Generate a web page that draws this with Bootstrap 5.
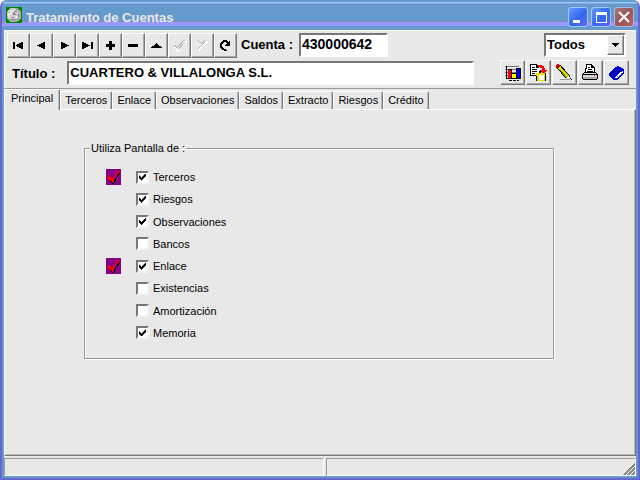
<!DOCTYPE html>
<html lang="es">
<head>
<meta charset="utf-8">
<meta name="viewport" content="width=device-width, initial-scale=1">
<title>Tratamiento de Cuentas</title>
<link rel="stylesheet" href="https://cdn.jsdelivr.net/npm/bootstrap@5.3.0/dist/css/bootstrap.min.css">
<style>
  :root { --face: #e8e8e8; --shade: #999; --dark: #777; --frame: #69c; }
  body { font: 11px/16px "Liberation Sans", Arial, sans-serif; color: #000; background: #fff; }
  svg { display: block; shape-rendering: crispEdges; }
  .window { background: var(--frame); border: 2px solid #66c; border-top: 0; border-radius: 7px 7px 0 0; padding: 0 2px 2px; }
  .titlebar { height: 30px; margin: 0 -2px; padding: 3px 4px 0; border-radius: 6px 6px 0 0;
    background: linear-gradient(#69c 0 2px, #9cf 2px 3px, #8ad 3px 4px, #69c 4px 21px, #88b 21px 22px, #99f 22px 26px, #69c 26px); }
  .caption { font-size: 13px; font-weight: 700; color: #e8e8e8; margin: 0; line-height: 14px; }
  .win-btns { gap: 3px; }
  .win-btn { width: 20px; height: 20px; padding: 0; border: 1px solid #9cf; border-radius: 3px; background: linear-gradient(135deg, #69f, #36e 55%, #66f); }
  .win-close { background: linear-gradient(135deg, #a77, #955 50%, #b66); border-color: #a9b8dd; }
  .client { background: var(--face); }
  .toolbar { font-size: 13px; font-weight: 700; border-top: 1px solid #fff; border-left: 1px solid #fff; border-bottom: 1px solid var(--shade); height: 59px; padding: 2px 7px 0 2px; }
  .tool { background: var(--face); border: 1px solid; border-color: #fff var(--dark) var(--dark) #fff; box-shadow: inset -1px -1px #aaa; padding: 0; display: flex; align-items: center; justify-content: center; }
  .nav-tool { width: 23px; height: 25px; }
  .big-tool { width: 25px; height: 25px; }
  .big-tools { gap: 1px; margin-left: 26px; }
  .field { height: 24px; border: 2px solid; border-color: var(--dark) #fff #fff var(--dark); border-radius: 0; background: #fff; padding: 0 1px 3px; font-weight: 700; color: #000; outline-offset: -3px; }
  .account { width: 89px; font-size: 14px; margin-left: 6px; }
  .name-row { padding-top: 2px; }
  .name-row label { margin: 6px 12px 0 5px; }
  .name-field { font-size: 13px; margin-top: 1px; padding-bottom: 1px; }
  .combo { width: 82px; margin-right: 3px; }
  .combo select { width: 100%; height: 24px; appearance: none; font-size: 13px; padding: 0 1px; }
  .combo span { position: absolute; top: 2px; right: 2px; width: 17px; height: 20px; pointer-events: none; }
  .tabs { height: 20px; }
  .tab-btn { background: none; height: 18px; padding: 0 4px; line-height: 17px; border: 0; border-top: 1px solid #fff; border-left: 1px solid #fff; border-right: 1px solid var(--dark); box-shadow: inset -1px 0 #bbb; border-radius: 2px 2px 0 0; }
  .tab-btn.active { height: 21px; padding: 0 6px 4px; margin-bottom: -1px; background: var(--face); position: relative; line-height: 17px; }
  .page { border: 1px solid; border-color: #fff var(--dark) var(--dark) #fff; box-shadow: inset -1px -1px #bbb; padding: 30px 81px 40px 79px; }
  .group { border: 1px solid var(--shade); box-shadow: 1px 1px #fff, inset 1px 1px #fff; height: 211px; padding: 0 0 0 21px; margin: 8px 0 0; }
  .group legend { float: none; width: auto; font-size: 11px; line-height: 16px; margin: -9px 0 13px -16px; padding: 0 1px; background: var(--face); }
  .options { height: 172px; }
  .mark-slot { width: 15px; height: 16px; margin-right: 15px; }
  .tick { appearance: none; width: 13px; height: 13px; margin: 0 4px 0 0; border: 2px solid; border-color: var(--dark) #f4f4f4 #f4f4f4 var(--dark); background: #fff; padding: 1px; }
  .tick:checked::before { content: ""; display: block; width: 7px; height: 7px; background: #000;
    clip-path: polygon(0 2px,1px 2px,1px 3px,2px 3px,2px 4px,3px 4px,3px 3px,4px 3px,4px 2px,5px 2px,5px 1px,6px 1px,6px 0,7px 0,7px 3px,6px 3px,6px 4px,5px 4px,5px 5px,4px 5px,4px 6px,3px 6px,3px 7px,2px 7px,2px 6px,1px 6px,1px 5px,0 5px); }
  .status { padding-top: 2px; gap: 2px; }
  .pane { height: 18px; border: 1px solid; border-color: var(--shade) #fff #fff var(--shade); flex: 310 1 0; }
  .pane-wide { flex-grow: 320; }
</style>
</head>
<body>
<div class="window min-vh-100 d-flex flex-column">
  <header class="titlebar d-flex">
    <svg class="mt-1 me-1" width="16" height="16" viewBox="0 0 16 16" aria-hidden="true"><path fill="#080" d="M0 0h16v16H0z"/><circle cx="8" cy="8" r="7.5" fill="#aaa"/><circle cx="7" cy="7" r="6" fill="#ccc"/><path fill="#e4e4e4" d="M4 3h5v2H6v3H4v3H2V6h2zM9 9h3v2H9z"/><path fill="#888" d="M10 2h2v1h-2zM8 4h3v1H9v2h1v1H7V6h1zM12 7h1v3h-1zM5 12h5v1H5zM6 10h2v1H6z"/></svg>
    <h1 class="caption flex-grow-1 mt-1 pt-1">Tratamiento de Cuentas</h1>
    <div class="win-btns d-flex mt-1">
      <button class="win-btn" type="button" aria-label="Minimizar"><svg width="18" height="18"><path fill="#fff" d="M4 12h7v3H4z"/></svg></button>
      <button class="win-btn" type="button" aria-label="Maximizar"><svg width="18" height="18"><path fill="#fff" fill-rule="evenodd" d="M4 4h11v11H4zm1 3v7h9V7z"/></svg></button>
      <button class="win-btn win-close" type="button" aria-label="Cerrar"><svg width="18" height="18"><path stroke="#fff" stroke-width="2" d="M4 4l10 10M14 4L4 14" shape-rendering="auto"/></svg></button>
    </div>
  </header>

  <main class="client flex-grow-1 d-flex flex-column">
    <form class="toolbar">
      <div class="d-flex align-items-start">
        <div class="d-flex">
          <button class="tool nav-tool" type="button" aria-label="Primero"><svg width="11" height="9"><path d="M0 1h2v7H0zM3 4h1V3h2V2h2V1h2v7H8V7H6V6H4V5H3z"/></svg></button>
          <button class="tool nav-tool" type="button" aria-label="Anterior"><svg width="9" height="9"><path d="M0 4h2V3h2V2h2V1h2v7H6V7H4V6H2V5H0z"/></svg></button>
          <button class="tool nav-tool" type="button" aria-label="Siguiente"><svg width="9" height="9"><path d="M9 4H7V3H5V2H3V1H1v7h2V7h2V6h2V5h2z"/></svg></button>
          <button class="tool nav-tool" type="button" aria-label="Último"><svg width="11" height="9"><path d="M8 4H6V3H4V2H2V1H0v7h2V7h2V6h2V5h2zM9 1h2v7H9z"/></svg></button>
          <button class="tool nav-tool" type="button" aria-label="Añadir"><svg width="9" height="9"><path d="M3 0h3v3h3v3H6v3H3V6H0V3h3z"/></svg></button>
          <button class="tool nav-tool" type="button" aria-label="Borrar"><svg width="11" height="9"><path d="M0 3h10v3H0z"/></svg></button>
          <button class="tool nav-tool" type="button" aria-label="Editar"><svg width="11" height="9"><path d="M5 2h1v1h1v1h1v1h2v1h1v1H0V6h1V5h2V4h1V3h1z"/></svg></button>
          <button class="tool nav-tool" type="button" aria-label="Aceptar" disabled><svg width="14" height="12"><path fill="none" stroke="#fff" stroke-width="2" d="M2 7l3 4 8-10"/><path fill="none" stroke="#bbb" d="M0 7l2-2 2 3 7-8h1M5 10l7-8"/></svg></button>
          <button class="tool nav-tool" type="button" aria-label="Cancelar" disabled><svg width="13" height="12"><path stroke="#fff" stroke-width="2" d="M2 2l9 9M11 2l-9 9"/><path stroke="#bbb" fill="none" d="M1 1l9 9M10 1l-9 9M2 0l4 4M9 0L6 4"/></svg></button>
          <button class="tool nav-tool" type="button" aria-label="Refrescar"><svg width="11" height="11"><path d="M3 0h4v1h1v1h1V1h1v5H5V5h1V4h1V3H6V2H4v1H3v1H2v3h1v1h1v1h2v1h1v1H4v-1H2V9H1V8H0V3h1V2h1V1h1z"/></svg></button>
        </div>
        <label class="ms-1 mt-1" for="cuenta">Cuenta :</label>
        <input class="field account me-auto" id="cuenta" value="430000642">
        <div class="combo position-relative">
          <select class="field" aria-label="Filtro"><option>Todos</option></select>
          <span class="tool" aria-hidden="true"><svg width="7" height="4"><path d="M0 0h7v1H6v1H5v1H4v1H3V3H2V2H1V1H0z"/></svg></span>
        </div>
      </div>
      <div class="name-row d-flex align-items-start">
        <label for="titulo">Título :</label>
        <input class="field name-field flex-grow-1" id="titulo" value="CUARTERO &amp; VILLALONGA S.L.">
        <div class="big-tools d-flex">
          <button class="tool big-tool" type="button" aria-label="Gráfico"><svg width="16" height="16"><path fill="#777" d="M0 1h14v1H0zM0 4h14v1H0zM0 7h14v1H0zM0 10h14v1H0z"/><path fill="#ff0" d="M7 9h4v4H7z"/><path fill="red" d="M3 5h3v8H3z"/><path fill="#00f" d="M12 3h3v10h-3z"/><path d="M1 1h1v12h13v1H1zM3 4h4v1H3zM6 5h1v8H6zM7 8h4v1H7zM11 3h4v1h-3v9h-1zM15 3h1v11h-1zM4 15h3v1H4zM8 15h3v1H8zM12 15h2v1h-2z"/></svg></button>
          <button class="tool big-tool" type="button" aria-label="Exportar"><svg width="17" height="17"><path fill="#fff" d="M0 0h7l2 3v9H0z"/><path d="M0 0h7v1H1v10h7v1H0zM7 1h1v1h1v2H6V1h1zM2 3h3v1H2zM2 5h5v1H2zM2 7h5v1H2zM2 9h3v1H2z"/><path fill="#dd0" d="M6 9h10v8H6z"/><path d="M9 7h2v2H9zM6 12h1v5H6zM15 9h1v8h-1z"/><path fill="#fff" d="M9 11h5v5H9z"/><path fill="red" d="M8 1h4v1h2v2h1v2h2v1h-1v1h-1v1h-3V8h-1V7h-1V6h2V4h-2V3H8z"/></svg></button>
          <button class="tool big-tool" type="button" aria-label="Modificar"><svg width="17" height="17"><path fill="#999" d="M4 15h10v1H4z"/><path stroke="#000" stroke-width="5" d="M2 2l10 11"/><path d="M12 10l4 6-6-4z"/><path stroke="#dd0" stroke-width="3" d="M3 3l9 10"/><path stroke="#880" d="M4 6l7 8"/><path fill="#c00" d="M1 0h2v1h1v2H3v1H1V3H0V1h1z"/><path fill="#fff" d="M12 12h1v1h1v1h-2z"/></svg></button>
          <button class="tool big-tool" type="button" aria-label="Imprimir"><svg width="17" height="17"><path fill="#fff" d="M4 0h6l3 3v6H3z"/><path d="M4 0h6v1h1v1h1v1h1v6h-1V4H9V1H5v4H4v4H3V4h1zM6 3h2v1H6zM6 5h4v1H6zM5 7h6v1H5zM2 8h12v1H2zM1 9h1v1H1zM14 9h1v1h-1zM0 10h16v5h-1v1H1v-1H0z"/><path fill="#ddd" d="M2 9h12v1H2zM1 11h14v2H1z"/><path fill="#aaa" d="M1 13h14v2H1zM3 11h1v1H3zM6 11h1v1H6zM9 11h1v1H9z"/><path fill="red" d="M12 11h1v1h-1z"/></svg></button>
          <button class="tool big-tool" type="button" aria-label="Ayuda"><svg width="16" height="16"><path fill="#00c" d="M8 1h2v1h2v1h2v1h1v5h-1v1h-1v1h-1v1h-1v1h-1v1H9v1H4v-1H3v-1H2v-1H1v-1H0V8h1V7h1V6h1V5h1V4h1V3h1V2h2z"/><path fill="#fff" d="M13 6h1v2h-1v1h-1v1h-1v1h-1v1H9v1H6v-1h1v-1h1v-1h1V9h1V8h1V7h2z"/><path fill="#006" d="M7 4h2v1H7zM5 6h2v1H5zM2 8h2v1H2z"/><path fill="#888" d="M12 8h1v1h-1zM10 10h1v1h-1zM8 11h1v1H8z"/></svg></button>
        </div>
      </div>
    </form>

    <div class="tabs d-flex align-items-end" role="tablist">
      <button class="tab-btn active" role="tab" type="button" aria-selected="true">Principal</button>
      <button class="tab-btn" role="tab" type="button">Terceros</button>
      <button class="tab-btn" role="tab" type="button">Enlace</button>
      <button class="tab-btn" role="tab" type="button">Observaciones</button>
      <button class="tab-btn" role="tab" type="button">Saldos</button>
      <button class="tab-btn" role="tab" type="button">Extracto</button>
      <button class="tab-btn" role="tab" type="button">Riesgos</button>
      <button class="tab-btn" role="tab" type="button">Crédito</button>
    </div>

    <section class="page flex-grow-1" role="tabpanel">
      <fieldset class="group" aria-labelledby="grp">
        <div class="d-flex"><legend id="grp">Utiliza Pantalla de :</legend></div>
        <div class="options d-flex flex-column justify-content-between">
          <div class="d-flex align-items-center"><span class="mark-slot"><svg width="15" height="16"><path fill="#808" d="M0 0h15v16H0z"/><path fill="none" stroke="#000" d="M3 10l3 4h2l2-5 4-5"/><path fill="red" d="M1 8l2-1 3 3 6-8h2L9 8l-2 5H5z"/></svg></span><input class="tick" type="checkbox" id="o1" checked><label for="o1">Terceros</label></div>
          <div class="d-flex align-items-center"><span class="mark-slot"></span><input class="tick" type="checkbox" id="o2" checked><label for="o2">Riesgos</label></div>
          <div class="d-flex align-items-center"><span class="mark-slot"></span><input class="tick" type="checkbox" id="o3" checked><label for="o3">Observaciones</label></div>
          <div class="d-flex align-items-center"><span class="mark-slot"></span><input class="tick" type="checkbox" id="o4"><label for="o4">Bancos</label></div>
          <div class="d-flex align-items-center"><span class="mark-slot"><svg width="15" height="16"><path fill="#808" d="M0 0h15v16H0z"/><path fill="none" stroke="#000" d="M3 10l3 4h2l2-5 4-5"/><path fill="red" d="M1 8l2-1 3 3 6-8h2L9 8l-2 5H5z"/></svg></span><input class="tick" type="checkbox" id="o5" checked><label for="o5">Enlace</label></div>
          <div class="d-flex align-items-center"><span class="mark-slot"></span><input class="tick" type="checkbox" id="o6"><label for="o6">Existencias</label></div>
          <div class="d-flex align-items-center"><span class="mark-slot"></span><input class="tick" type="checkbox" id="o7"><label for="o7">Amortización</label></div>
          <div class="d-flex align-items-center"><span class="mark-slot"></span><input class="tick" type="checkbox" id="o8" checked><label for="o8">Memoria</label></div>
        </div>
      </fieldset>
    </section>

    <footer class="status d-flex">
      <div class="pane pane-wide"></div>
      <div class="pane d-flex justify-content-end align-items-end"><svg width="12" height="12"><path stroke="#888" stroke-width="2" d="M0 13L13 0M4 13l9-9M8 13l5-5"/><path stroke="#fff" d="M-1 12L12-1M3 12l9-9M7 12l5-5"/></svg></div>
    </footer>
  </main>
</div>
<script src="https://cdn.jsdelivr.net/npm/bootstrap@5.3.0/dist/js/bootstrap.bundle.min.js"></script>
</body>
</html>
